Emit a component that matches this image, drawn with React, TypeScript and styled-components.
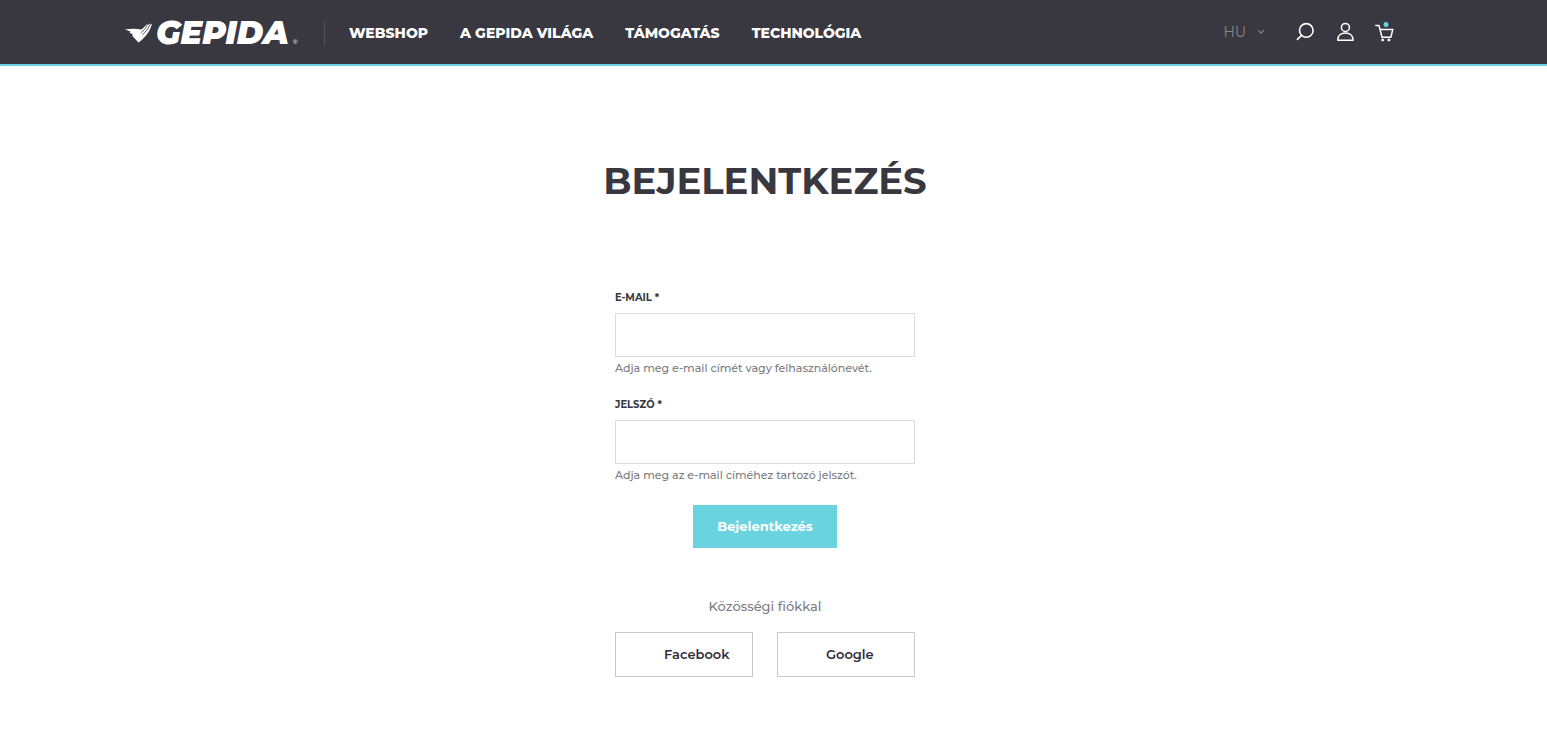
import React from "react";
import styled, { createGlobalStyle } from "styled-components";

const ink = "#393740";
const aqua = "#69d3df";

const GlobalStyle = createGlobalStyle`
  *, *::before, *::after { box-sizing: border-box; }
  body {
    margin: 0;
    background: #fff;
    color: ${ink};
    font-family: Montserrat, Inter, "Open Sans", sans-serif;
  }
`;

const Header = styled.header`
  background: ${ink};
  border-bottom: 2px solid ${aqua};
  padding-right: 17px;
`;

const HeaderInner = styled.div`
  display: flex;
  align-items: center;
  max-width: 1280px;
  height: 64px;
  margin: 0 auto;
`;

const LogoLink = styled.a`
  display: flex;
  width: 199px;
`;

const Divider = styled.span`
  width: 1px;
  height: 24px;
  margin-top: 2px;
  background: #55535c;
`;

const Nav = styled.nav`
  display: flex;
  gap: 32px;
  padding: 2px 0 0 24px;
  margin-right: auto;
`;

const NavLink = styled.a`
  color: #fff;
  font-size: 14px;
  font-weight: 800;
  line-height: 20px;
  text-decoration: none;
  text-transform: uppercase;
`;

const Tools = styled.div`
  display: flex;
  align-items: center;
  padding-right: 10px;
  gap: 20px;
`;

const Language = styled.button`
  display: flex;
  align-items: center;
  gap: 11px;
  margin-right: 10px;
  padding: 0;
  border: 0;
  background: none;
  color: #88878c;
  font: inherit;
  font-size: 14px;
  line-height: 20px;
`;

const ToolLink = styled.a`
  display: flex;
  color: #fff;
`;

const Main = styled.main`
  display: flex;
  flex-direction: column;
  align-items: center;
  padding: 91px 17px 70px 0;
`;

const Title = styled.h1`
  margin: 0 0 86px;
  font-size: 37px;
  font-weight: 700;
  line-height: 47px;
  text-transform: uppercase;
`;

const Form = styled.form`
  display: flex;
  flex-direction: column;
  width: 100%;
  max-width: 300px;
`;

const Field = styled.div`
  display: flex;
  flex-direction: column;
  margin-bottom: 19px;
`;

const Label = styled.label`
  margin-bottom: 7px;
  font-size: 10px;
  font-weight: 700;
  line-height: 16px;
  text-transform: uppercase;
`;

const Input = styled.input`
  height: 44px;
  padding: 0 16px;
  border: 1px solid #dcdcdc;
  border-radius: 0;
  background: #fff;
  font: inherit;
  font-size: 14px;
`;

const Hint = styled.p`
  margin: 0;
  padding-top: 1px;
  color: #7d7c81;
  font-size: 11px;
  font-weight: 500;
  line-height: 20px;
`;

const Submit = styled.button`
  align-self: center;
  height: 43px;
  margin-top: 1px;
  padding: 0 24px 2px;
  border: 0;
  background: ${aqua};
  color: #fff;
  font: inherit;
  font-size: 13px;
  font-weight: 700;
`;

const SocialCaption = styled.p`
  margin: 48px 0 16px;
  color: #7d7c81;
  font-size: 13px;
  font-weight: 500;
  line-height: 20px;
  text-align: center;
`;

const SocialRow = styled.div`
  display: grid;
  grid-template-columns: 1fr 1fr;
  gap: 24px;
`;

const SocialButton = styled.button`
  height: 45px;
  padding: 0 0 2px 48px;
  border: 1px solid #c8c8ca;
  background: #fff;
  color: #302e36;
  font: inherit;
  font-size: 13px;
  font-weight: 600;
  text-align: left;
`;

const Logo = () => (
  <svg width="180" height="44" viewBox="0 -10 180 44" fill="#fff" aria-hidden="true">
    <path d="M0 9.6 C5 8.6 11 8.4 16 9.6 C18.4 8.2 20.4 6 22 4 L24 4.4 L24.6 3.6 L26.9 4.4 C24.6 12 19.6 18 13.4 22.6 L7 15.6 L8.2 14.8 L4.4 12.4 L5.4 11.4 Z" />
    <path d="M23.4 3.2 Q21 8.6 16.2 12.8 M25.8 3.2 Q23 10.2 17.6 14.8" fill="none" stroke={ink} strokeWidth="0.8" />
    <text x="31" y="24" fontFamily='Montserrat, "DejaVu Sans", sans-serif' fontSize="32" fontWeight="900" fontStyle="italic">
      GEPIDA
    </text>
    <text x="168" y="24" fontFamily='"Liberation Sans", sans-serif' fontSize="6">®</text>
  </svg>
);

const Chevron = () => (
  <svg width="8" height="6" viewBox="0 0 8 6" fill="none" stroke="currentColor" strokeWidth="1.2" aria-hidden="true">
    <path d="M1.2 1.2 L4 4.2 L6.8 1.2" />
  </svg>
);

const SearchIcon = () => (
  <svg width="20" height="20" viewBox="0 0 20 20" fill="none" stroke="currentColor" strokeWidth="1.6" strokeLinecap="round" aria-hidden="true">
    <circle cx="11.3" cy="8.4" r="6.8" />
    <path d="M6.6 13.4 L2.4 17.4" />
  </svg>
);

const UserIcon = () => (
  <svg width="20" height="20" viewBox="0 0 20 20" fill="none" stroke="currentColor" strokeWidth="1.5" strokeLinejoin="round" aria-hidden="true">
    <circle cx="10.4" cy="5.4" r="4" />
    <path d="M2.7 18.2 C2.7 13.5 6 11 10.4 11 C14.8 11 18.1 13.5 18.1 18.2 Z" />
  </svg>
);

const CartIcon = () => (
  <svg width="20" height="20" viewBox="0 0 20 20" fill="none" stroke="currentColor" strokeWidth="1.5" strokeLinecap="round" strokeLinejoin="round" aria-hidden="true">
    <path d="M0.8 3.4 H4 L7 15.2 H15.8 L17.8 7.6 H5.2" />
    <circle cx="7.6" cy="18" r="1" fill="currentColor" strokeWidth="1" />
    <circle cx="13.8" cy="18" r="1" fill="currentColor" strokeWidth="1" />
    <circle cx="11" cy="2.5" r="2.5" fill={aqua} stroke="none" />
  </svg>
);

const navItems = ["Webshop", "A Gepida világa", "Támogatás", "Technológia"];

const fields = [
  { id: "email", type: "text", label: "E-mail *", hint: "Adja meg e-mail címét vagy felhasználónevét." },
  { id: "password", type: "password", label: "Jelszó *", hint: "Adja meg az e-mail címéhez tartozó jelszót." },
];

export default function App() {
  return (
    <>
      <GlobalStyle />
      <Header>
        <HeaderInner>
          <LogoLink href="#" aria-label="Gepida">
            <Logo />
          </LogoLink>
          <Divider />
          <Nav>
            {navItems.map((item) => (
              <NavLink href="#" key={item}>{item}</NavLink>
            ))}
          </Nav>
          <Tools>
            <Language type="button">
              HU
              <Chevron />
            </Language>
            <ToolLink href="#" aria-label="Keresés"><SearchIcon /></ToolLink>
            <ToolLink href="#" aria-label="Fiók"><UserIcon /></ToolLink>
            <ToolLink href="#" aria-label="Kosár"><CartIcon /></ToolLink>
          </Tools>
        </HeaderInner>
      </Header>
      <Main>
        <Title>Bejelentkezés</Title>
        <Form>
          {fields.map((f) => (
            <Field key={f.id}>
              <Label htmlFor={f.id}>{f.label}</Label>
              <Input id={f.id} type={f.type} aria-describedby={`${f.id}-hint`} />
              <Hint id={`${f.id}-hint`}>{f.hint}</Hint>
            </Field>
          ))}
          <Submit type="submit">Bejelentkezés</Submit>
          <SocialCaption>Közösségi fiókkal</SocialCaption>
          <SocialRow>
            <SocialButton type="button">Facebook</SocialButton>
            <SocialButton type="button">Google</SocialButton>
          </SocialRow>
        </Form>
      </Main>
    </>
  );
}
